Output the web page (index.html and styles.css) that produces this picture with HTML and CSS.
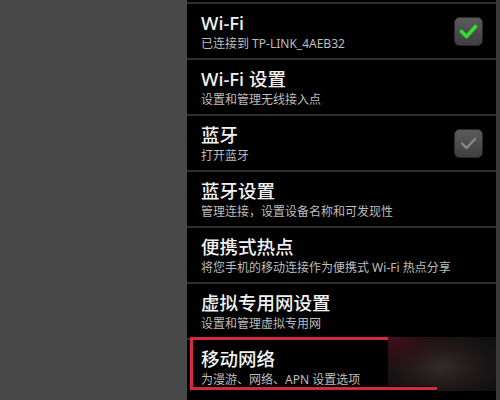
FILE: index.html
```html
<!DOCTYPE html>
<html lang="zh-CN">
<head>
<meta charset="utf-8">
<title>无线和网络设置</title>
<link rel="stylesheet" href="styles.css">
</head>
<body>
<div class="screen">
  <div class="side"></div>
  <div class="panel">
    <div class="row">
      <div class="text">
        <div class="title">Wi-Fi</div>
        <div class="sub">已连接到 TP-LINK_4AEB32</div>
      </div>
      <svg class="check" width="29" height="29" viewBox="0 0 29 29">
        <defs>
          <linearGradient id="g1" x1="0" y1="0" x2="0" y2="1">
            <stop offset="0" stop-color="#5c5c5c"/>
            <stop offset="1" stop-color="#3e3e3e"/>
          </linearGradient>
        </defs>
        <rect x="0.5" y="0.5" width="28" height="28" rx="5" fill="url(#g1)" stroke="#2a2a2a"/>
        <path d="M7.5 14.5 L12.5 19.5 L21.5 9.5" fill="none" stroke="#2ee02e" stroke-width="3.6" stroke-linecap="round" stroke-linejoin="round"/>
      </svg>
    </div>
    <div class="row">
      <div class="text">
        <div class="title">Wi-Fi 设置</div>
        <div class="sub">设置和管理无线接入点</div>
      </div>
    </div>
    <div class="row">
      <div class="text">
        <div class="title">蓝牙</div>
        <div class="sub">打开蓝牙</div>
      </div>
      <svg class="check" width="29" height="29" viewBox="0 0 29 29">
        <defs>
          <linearGradient id="g2" x1="0" y1="0" x2="0" y2="1">
            <stop offset="0" stop-color="#5c5c5c"/>
            <stop offset="1" stop-color="#3e3e3e"/>
          </linearGradient>
        </defs>
        <rect x="0.5" y="0.5" width="28" height="28" rx="5" fill="url(#g2)" stroke="#2a2a2a"/>
        <path d="M8 14.5 L12.5 19 L21 10" fill="none" stroke="#8a8a8a" stroke-width="2.4" stroke-linecap="round" stroke-linejoin="round"/>
      </svg>
    </div>
    <div class="row">
      <div class="text">
        <div class="title">蓝牙设置</div>
        <div class="sub">管理连接，设置设备名称和可发现性</div>
      </div>
    </div>
    <div class="row">
      <div class="text">
        <div class="title">便携式热点</div>
        <div class="sub">将您手机的移动连接作为便携式 Wi-Fi 热点分享</div>
      </div>
    </div>
    <div class="row">
      <div class="text">
        <div class="title">虚拟专用网设置</div>
        <div class="sub">设置和管理虚拟专用网</div>
      </div>
    </div>
    <div class="row row-mark">
      <div class="text">
        <div class="title">移动网络</div>
        <div class="sub">为漫游、网络、APN 设置选项</div>
      </div>
      <div class="highlight"></div>
      <div class="glow"></div>
    </div>
  </div>
  <div class="edge"></div>
</div>
</body>
</html>
```

FILE: styles.css
```css
html, body {
  margin: 0;
  padding: 0;
  background: #484848;
}

.screen {
  display: flex;
  width: 500px;
  height: 400px;
  overflow: hidden;
  font-family: "Noto Sans", "Noto Sans CJK SC", "DejaVu Sans", sans-serif;
}

.side {
  width: 187px;
  flex: none;
  background: #484848;
}

.panel {
  width: 309px;
  flex: none;
  background: #000;
  padding-top: 2px;
  display: flex;
  flex-direction: column;
}

.edge {
  flex: 1;
  background: #3a3a3a;
}

.row {
  position: relative;
  height: 54px;
  border-top: 2px solid #2f2f2f;
  display: flex;
  align-items: center;
  padding: 0 13px 0 14px;
}

.text {
  flex: 1;
  align-self: flex-start;
  padding-top: 8px;
}

.title {
  color: #f2f2f2;
  font-size: 18.5px;
  line-height: 22px;
  font-weight: 500;
  white-space: nowrap;
}

.sub {
  margin-top: 2px;
  color: #bdbdbd;
  font-size: 12px;
  line-height: 16px;
  white-space: nowrap;
}

.check {
  flex: none;
  display: block;
}

.highlight {
  position: absolute;
  left: 3px;
  top: -3px;
  right: 2px;
  height: 47px;
  border: 3px solid #d62a3c;
}

.glow {
  position: absolute;
  left: 201px;
  top: -3px;
  right: 0;
  height: 54px;
  background:
    radial-gradient(ellipse 60% 70% at 0 0, rgba(120, 12, 36, 0.55) 0%, rgba(90, 10, 28, 0.25) 50%, rgba(0, 0, 0, 0) 100%),
    radial-gradient(ellipse 55% 65% at 50% 55%, #342a2a 0%, #221a1b 50%, #121111 100%);
  clip-path: polygon(0 0, 100% 0, 100% 100%, 49px 100%, 49px 49px, 0 49px);
}
```
